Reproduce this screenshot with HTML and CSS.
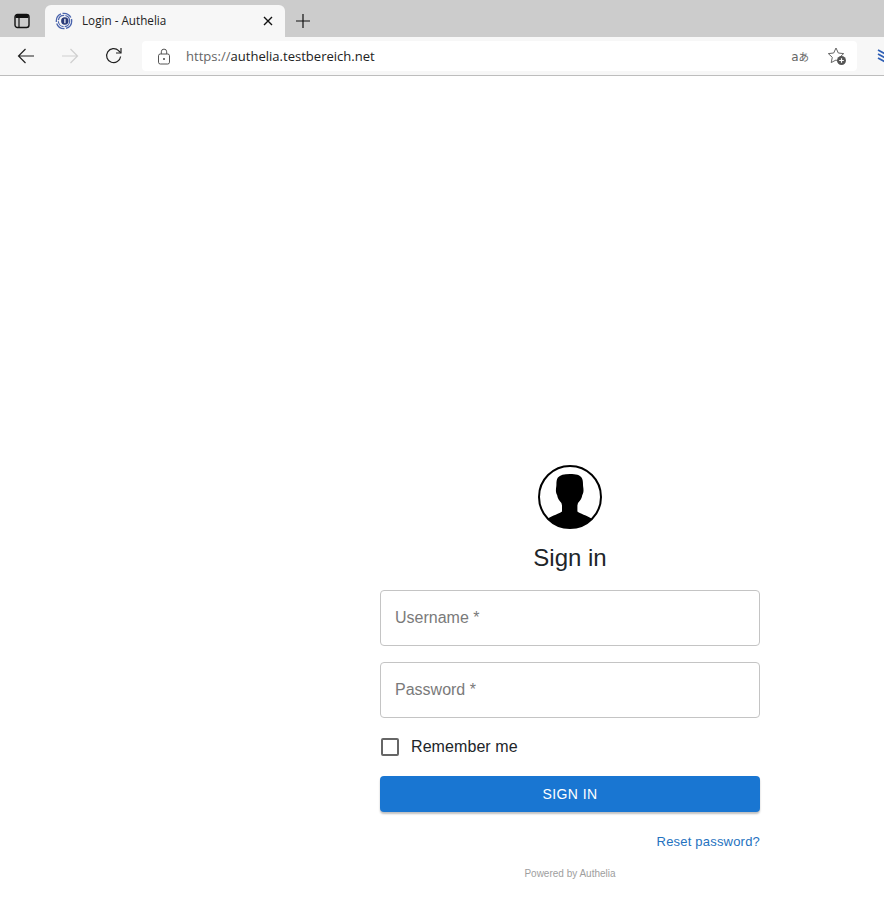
FILE: index.html
```html
<!DOCTYPE html>
<html lang="en">
<head>
<meta charset="utf-8">
<title>Login - Authelia</title>
<link rel="stylesheet" href="styles.css">
</head>
<body>
<header class="browser">
  <div class="tabstrip">
    <div class="tab-actions">
      <svg class="icon-tabs" width="16" height="16" viewBox="0 0 16 16"><rect x="1" y="1.500" width="14" height="13" rx="2.500" fill="none" stroke="#111" stroke-width="1.400"/><path d="M1.500 3.800a2 2 0 0 1 2-2h9a2 2 0 0 1 2 2v1.200h-13z" fill="#111"/><path d="M5 5v9" stroke="#111" stroke-width="1.200"/></svg>
    </div>
    <div class="tab">
      <svg class="favicon" width="18" height="18" viewBox="0 0 18 18"><g fill="none" stroke="#4a64ad"><circle cx="9" cy="9" r="7.700" stroke-width="1.300" stroke-dasharray="10 1.500"/><circle cx="9" cy="9" r="5.700" stroke-width="1.200" stroke-dasharray="8 1.200"/></g><circle cx="9.800" cy="9" r="3.700" fill="#2a3a78"/><rect x="9.300" y="6.800" width="1.200" height="4.400" fill="#fff"/></svg>
      <span class="tab-title">Login - Authelia</span>
      <svg class="tab-close" width="10" height="10" viewBox="0 0 10 10"><path d="M1 1l8 8M9 1l-8 8" stroke="#111" stroke-width="1.400"/></svg>
    </div>
    <svg class="new-tab" width="16" height="16" viewBox="0 0 16 16"><path d="M8 1v14M1 8h14" stroke="#111" stroke-width="1.200"/></svg>
  </div>
  <div class="toolbar">
    <svg class="tool back" width="18" height="16" viewBox="0 0 18 16"><path d="M17 8H1.500M8.500 1 1.500 8l7 7" fill="none" stroke="#222" stroke-width="1.200"/></svg>
    <svg class="tool forward" width="18" height="16" viewBox="0 0 18 16"><path d="M1 8h15.500M9.500 1l7 7-7 7" fill="none" stroke="#cfcfcf" stroke-width="1.200"/></svg>
    <svg class="tool reload" width="18" height="18" viewBox="0 0 18 18"><path d="M15.600 9.500A7 7 0 1 1 13.600 3.700L15.800 5.800" fill="none" stroke="#222" stroke-width="1.200"/><path d="M16 1v5h-5" fill="none" stroke="#222" stroke-width="1.200"/></svg>
    <div class="omnibox">
      <svg class="lock" width="14" height="17" viewBox="0 0 14 17"><rect x="1.500" y="6" width="11" height="10" rx="1.800" fill="none" stroke="#555" stroke-width="1"/><path d="M4.300 6V3.800a2.700 2.700 0 0 1 5.400 0V6" fill="none" stroke="#555" stroke-width="1"/><circle cx="7" cy="11" r="1" fill="#444"/></svg>
      <span class="url"><span class="url-scheme">https://</span>authelia.testbereich.net</span>
      <span class="translate"><span class="translate-latin">a</span>あ</span>
      <svg class="fav-add" width="20" height="20" viewBox="0 0 20 20"><path d="M9 2l2.300 5 5.400.600-4 3.700 1.100 5.300L9 14l-4.800 2.600 1.100-5.300-4-3.700 5.400-.600z" fill="none" stroke="#666" stroke-width="1" stroke-linejoin="round"/><circle cx="14.500" cy="14.500" r="4.500" fill="#555"/><path d="M14.500 12.200v4.600M12.200 14.500h4.600" stroke="#fff" stroke-width="1.200"/></svg>
    </div>
    <svg class="ext" width="10" height="18" viewBox="0 0 10 18"><path d="M1 3l9 5M1 7l9 5M1 11l9 5" stroke="#2f5fb5" stroke-width="1.700"/></svg>
  </div>
</header>
<main class="page">
  <form class="login">
    <svg class="avatar" width="64" height="64" viewBox="0 0 64 64">
      <defs><clipPath id="avatar-clip"><circle cx="32" cy="32" r="31"/></clipPath></defs>
      <path clip-path="url(#avatar-clip)" d="M32 9c6 0 10 1 11.500 3.500 1.300 2 1.500 4.500 1.500 7 0 2 .5 3.500.5 6 0 2.500-.7 3.500-1.200 4.500-.5 3-1.800 5.500-4.300 8l-.6 2.500v6c2 2 10 4 14 7 3 2 5 6 5 12H5c0-6 2-10 5-12 4-3 12-5 14-7v-6l-.6-2.500c-2.500-2.500-3.800-5-4.300-8-.5-1-1.200-2-1.200-4.500 0-2.500.5-4 .5-6 0-2.500.2-5 1.500-7C22 10 26 9 32 9z" fill="#000"/>
      <circle cx="32" cy="32" r="31" fill="none" stroke="#000" stroke-width="2"/>
    </svg>
    <h1 class="title">Sign in</h1>
    <div class="field"><span class="placeholder">Username *</span></div>
    <div class="field"><span class="placeholder">Password *</span></div>
    <label class="remember"><span class="checkbox"></span><span>Remember me</span></label>
    <button class="submit" type="button">SIGN IN</button>
    <div class="links"><a class="reset">Reset password?</a></div>
    <p class="powered">Powered by Authelia</p>
  </form>
</main>
</body>
</html>
```

FILE: styles.css
```css
html, body { margin: 0; padding: 0; background: #fff; }
body { width: 884px; height: 900px; overflow: hidden; font-family: "Liberation Sans", Arial, sans-serif; }

.browser { display: flex; flex-direction: column; }
.tabstrip { height: 37px; background: #cccccc; display: flex; align-items: flex-end; }
.tab-actions { width: 45px; height: 37px; display: flex; align-items: center; justify-content: center; box-sizing: border-box; padding: 5px 2px 0 0; }
.tab { width: 240px; height: 32px; background: #f7f7f7; border-radius: 6px 6px 0 0; display: flex; align-items: center; box-sizing: border-box; padding: 0 12px 0 10px; }
.favicon { flex: none; }
.tab-title { font-family: "Open Sans", sans-serif; font-size: 11.700px; color: #222; margin-left: 9px; flex: 1; position: relative; top: -1px; }
.new-tab { margin: 0 0 8px 10px; }

.toolbar { height: 38px; background: #f7f7f7; border-bottom: 1px solid #bdbdbd; display: flex; align-items: center; }
.tool { flex: none; }
.back { margin-left: 17px; }
.forward { margin-left: 26px; }
.reload { margin-left: 26px; }
.omnibox { margin-left: 19px; width: 715px; height: 30px; background: #fff; border-radius: 4px; display: flex; align-items: center; box-sizing: border-box; padding: 0 10px 0 15px; flex: none; }
.lock { flex: none; }
.url { font-family: "Open Sans", sans-serif; font-size: 13.050px; color: #222; margin-left: 15px; flex: 1; }
.url-scheme { color: #666; }
.translate { font-family: "Noto Sans CJK JP", "Open Sans", sans-serif; font-size: 10.500px; color: #666; margin-right: 18px; }
.translate-latin { font-family: "DejaVu Sans", sans-serif; font-size: 12px; }
.fav-add { flex: none; }
.ext { margin-left: 20px; flex: none; }

.page { display: flex; flex-direction: column; padding: 389px 0 0 380px; }
.login { width: 380px; display: flex; flex-direction: column; }
.avatar { display: block; align-self: center; }
.title { margin: 14px 0 18px; font-weight: 400; font-size: 24px; line-height: 29px; color: #212529; text-align: center; }
.field { height: 56px; box-sizing: border-box; border: 1px solid #c4c4c4; border-radius: 4px; margin-bottom: 16px; display: flex; align-items: center; padding-left: 14px; }
.placeholder { font-size: 16px; color: #7a7a7a; }
.remember { display: flex; align-items: center; height: 24px; margin: 1px 0 0 1px; font-size: 16px; letter-spacing: .08px; color: #212529; }
.checkbox { width: 18px; height: 18px; border: 2px solid #666; border-radius: 2px; box-sizing: border-box; margin-right: 12px; }
.submit { height: 36px; margin-top: 17px; border: 0; border-radius: 4px; background: #1976d2; color: #fff; font-family: "Liberation Sans", sans-serif; font-size: 14px; letter-spacing: .4px; box-shadow: 0 2px 2px rgba(0,0,0,.25); padding: 0; }
.links { margin-top: 20px; text-align: right; height: 17px; line-height: 17px; }
.reset { font-size: 13px; letter-spacing: .2px; color: #2472c0; }
.powered { margin: 18px 0 0; text-align: center; font-size: 10px; line-height: 14px; color: #9e9e9e; }
```
